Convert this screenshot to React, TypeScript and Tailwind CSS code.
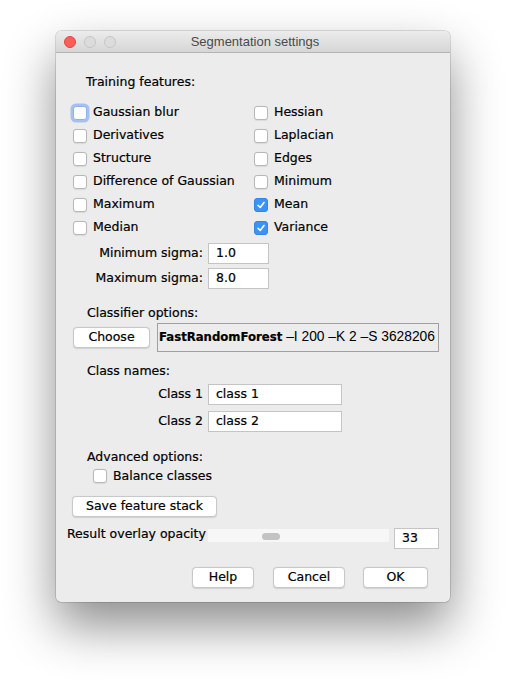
import React from "react";

const font = "font-['DejaVu_Sans',sans-serif] text-[12.5px] [-webkit-text-stroke:0.2px_#000]";

function Checkbox({ checked, focused }: { checked?: boolean; focused?: boolean }) {
	if (checked) {
		return (
			<div className="w-[14px] h-[14px] rounded-[3px] bg-[#3b93f6] border border-[#3486e6] flex items-center justify-center shrink-0">
				<svg width="10" height="10" viewBox="0 0 10 10">
					<path d="M2 5.3 L4.2 7.5 L8 2.5" fill="none" stroke="white" strokeWidth="1.6" strokeLinecap="round" strokeLinejoin="round" />
				</svg>
			</div>
		);
	}
	return (
		<div
			className={
				focused
					? "w-[14px] h-[14px] rounded-[3px] bg-white border border-[#8db5ec] shadow-[0_0_0_2.5px_rgba(106,160,236,0.55)] shrink-0"
					: "w-[14px] h-[14px] rounded-[3px] bg-white border border-[#b8b8b8] shadow-[0_0.5px_1px_rgba(0,0,0,0.08)] shrink-0"
			}
		/>
	);
}

function CheckItem({ label, checked, focused }: { label: string; checked?: boolean; focused?: boolean }) {
	return (
		<div className="h-[23px] flex items-center gap-[6px]">
			<Checkbox checked={checked} focused={focused} />
			<span>{label}</span>
		</div>
	);
}

function MacButton({ label, className }: { label: string; className: string }) {
	return (
		<div
			className={
				"h-[21px] bg-white border border-[#c8c8c8] rounded-[4px] shadow-[0_0.5px_1px_rgba(0,0,0,0.12)] flex items-center justify-center " +
				className
			}
		>
			{label}
		</div>
	);
}

function Field({ value, className }: { value: string; className: string }) {
	return (
		<div className={"h-[21px] bg-white border border-[#c4c4c4] flex items-center pl-[7px] " + className}>
			{value}
		</div>
	);
}

export default function App() {
	const left = ["Gaussian blur", "Derivatives", "Structure", "Difference of Gaussian", "Maximum", "Median"];
	const right = ["Hessian", "Laplacian", "Edges", "Minimum", "Mean", "Variance"];

	return (
		<div className="w-[506px] h-[682px] bg-white pt-[31px] pl-[56px] overflow-hidden">
			<div
				className={
					"w-[394px] h-[571px] bg-[#ececec] rounded-[5px] shadow-[0_0_0_0.5px_rgba(0,0,0,0.25),0_24px_50px_rgba(0,0,0,0.45)] text-black flex flex-col " +
					font
				}
			>
				{/* title bar */}
				<div className="h-[22px] rounded-t-[5px] bg-gradient-to-b from-[#ececec] to-[#d6d6d6] border-b border-[#b4b4b4] flex items-center relative">
					<div className="flex gap-[8px] pl-[8px]">
						<div className="w-[12px] h-[12px] rounded-full bg-[#fc5f57] border border-[#df4744]" />
						<div className="w-[12px] h-[12px] rounded-full bg-[#dcdcdc] border border-[#c6c6c6]" />
						<div className="w-[12px] h-[12px] rounded-full bg-[#dcdcdc] border border-[#c6c6c6]" />
					</div>
					<div className="absolute inset-0 flex items-center justify-center font-['Liberation_Sans',sans-serif] text-[13px] text-[#4a4a4a] [-webkit-text-stroke:0px] pl-[4px]">
						Segmentation settings
					</div>
				</div>

				<div className="h-[16px] leading-[16px] mt-[21px] ml-[30px]">Training features:</div>

				<div className="grid grid-cols-[181px_1fr] mt-[11px] pl-[17px]">
					<div className="flex flex-col">
						{left.map((l, i) => (
							<CheckItem key={l} label={l} focused={i === 0} />
						))}
					</div>
					<div className="flex flex-col">
						{right.map((l) => (
							<CheckItem key={l} label={l} checked={l === "Mean" || l === "Variance"} />
						))}
					</div>
				</div>

				<div className="flex flex-col gap-[4px] mt-[4px]">
					<div className="flex items-center">
						<div className="w-[147px] text-right">Minimum sigma:</div>
						<Field value="1.0" className="ml-[5px] w-[61px]" />
					</div>
					<div className="flex items-center">
						<div className="w-[147px] text-right">Maximum sigma:</div>
						<Field value="8.0" className="ml-[5px] w-[61px]" />
					</div>
				</div>

				<div className="h-[16px] leading-[16px] mt-[16px] ml-[31px]">Classifier options:</div>

				<div className="flex items-center mt-[2px] ml-[17px] h-[29px]">
					<MacButton label="Choose" className="w-[77px] h-[20px]" />
					<div className="ml-[7px] w-[282px] h-[29px] border border-[#a0a0a0] bg-[#ececec] flex items-center pl-[1px] overflow-hidden whitespace-nowrap">
						<span className="font-bold text-[11.7px]">FastRandomForest</span>
						<span className="font-['Liberation_Sans',sans-serif] text-[13.8px] [-webkit-text-stroke:0px]">&nbsp;–I 200 –K 2 –S 3628206</span>
					</div>
				</div>

				<div className="h-[16px] leading-[16px] mt-[11px] ml-[31px]">Class names:</div>

				<div className="flex flex-col gap-[6px] mt-[5px]">
					<div className="flex items-center">
						<div className="w-[147px] text-right">Class 1</div>
						<Field value="class 1" className="ml-[5px] w-[134px]" />
					</div>
					<div className="flex items-center">
						<div className="w-[147px] text-right">Class 2</div>
						<Field value="class 2" className="ml-[5px] w-[134px]" />
					</div>
				</div>

				<div className="h-[16px] leading-[16px] mt-[17px] ml-[31px]">Advanced options:</div>
				<div className="h-[16px] mt-[3px] ml-[37px] flex items-center gap-[6px]">
					<Checkbox />
					<span>Balance classes</span>
				</div>

				<div className="mt-[12px] ml-[16px]">
					<MacButton label="Save feature stack" className="w-[145px] h-[20px]" />
				</div>

				<div className="flex items-start mt-[11px] h-[21px]">
					<div className="ml-[11px] w-[141px] h-[16px] leading-[16px] -mt-[2px] whitespace-nowrap">Result overlay opacity</div>
					<div className="mt-[1px] w-[181px] h-[13px] bg-[#f7f7f7] relative">
						<div className="absolute left-[54px] top-[4px] w-[18px] h-[7px] rounded-full bg-[#c3c3c3]" />
					</div>
					<Field value="33" className="ml-[5px] w-[45px]" />
				</div>

				<div className="flex justify-end pr-[22px] mt-[18px] gap-[19px]">
					<MacButton label="Help" className="w-[62px]" />
					<MacButton label="Cancel" className="w-[72px]" />
					<MacButton label="OK" className="w-[65px] -ml-[1px]" />
				</div>
			</div>
		</div>
	);
}
